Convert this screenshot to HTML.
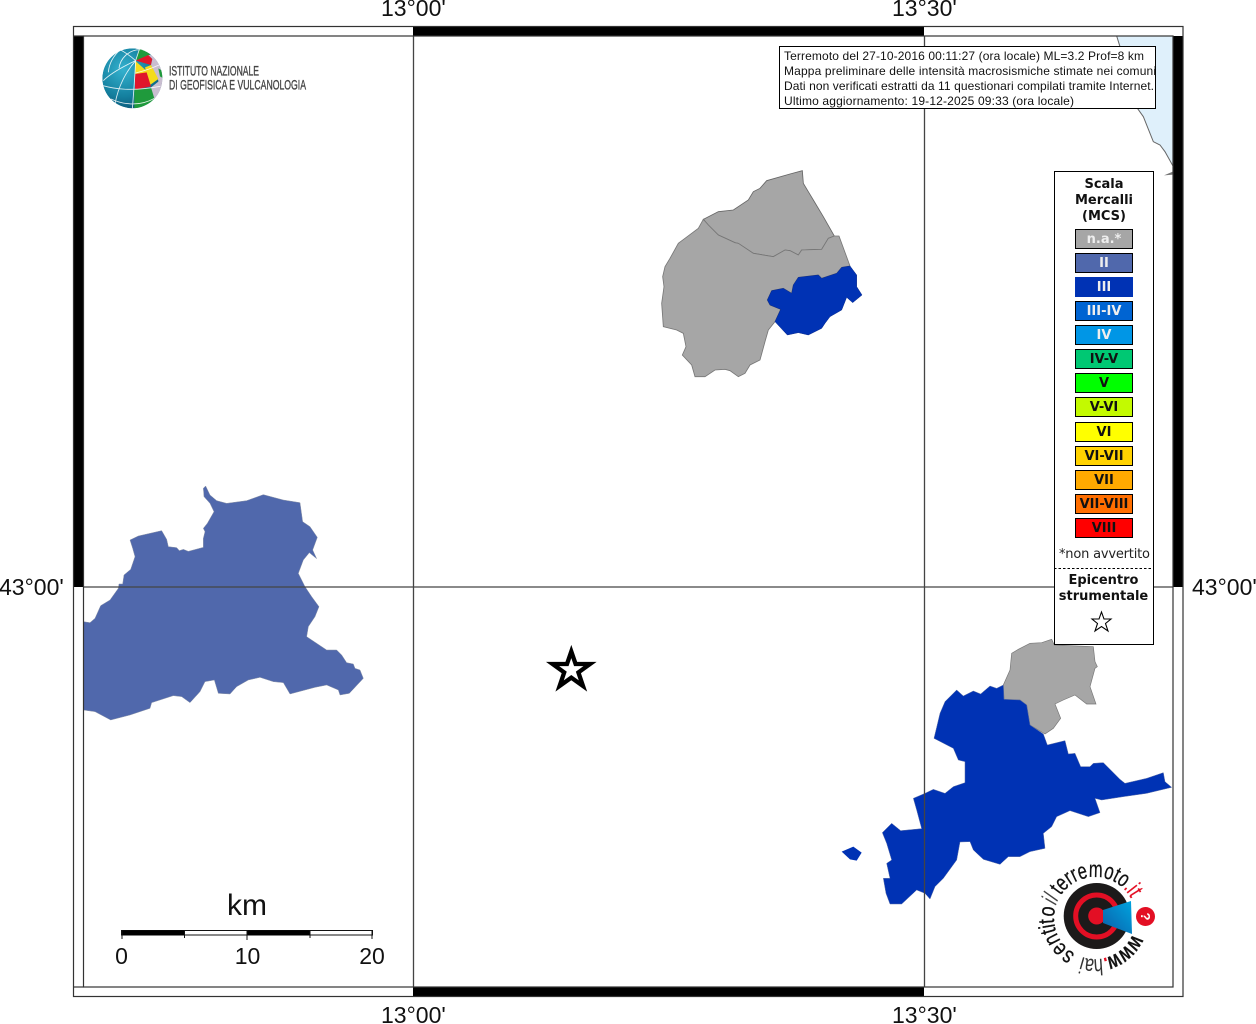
<!DOCTYPE html>
<html>
<head>
<meta charset="utf-8">
<style>
html,body{margin:0;padding:0;background:#fff;width:1256px;height:1024px;overflow:hidden}
svg{display:block}
.m{font-family:"Liberation Sans",Arial,sans-serif;font-size:23px;fill:#111}
.i{font-family:"Liberation Sans",Arial,sans-serif;font-size:12px;fill:#111}
.d{font-family:"DejaVu Sans",sans-serif;font-size:13px;font-weight:bold;text-anchor:middle}
.h{font-family:"DejaVu Sans",sans-serif;font-size:13px;font-weight:bold;text-anchor:middle;fill:#111}
.lg text{font-family:"Liberation Sans",sans-serif;font-size:23px;text-anchor:middle;fill:#111}
</style>
</head>
<body>
<svg width="1256" height="1024" viewBox="0 0 1256 1024" xmlns="http://www.w3.org/2000/svg">
<defs>
<radialGradient id="gl" cx="35%" cy="35%" r="75%"><stop offset="0" stop-color="#35b2cf"/><stop offset=".6" stop-color="#14809f"/><stop offset="1" stop-color="#0b4f70"/></radialGradient>
<linearGradient id="cone" x1="0" y1="1" x2="1" y2="0"><stop offset="0" stop-color="#0a5ea8"/><stop offset="1" stop-color="#00a5e0"/></linearGradient>
<clipPath id="gc"><circle cx="112" cy="118" r="90"/></clipPath>
<clipPath id="ib"><rect x="780" y="46" width="376" height="63"/></clipPath>
</defs>

<!-- sea -->
<g transform="translate(1110 20) scale(.33333)">
<polygon points="20,48 190,48 190,440 150,375 130,365 100,290 80,262 30,80" fill="#dff0fb"/>
<polyline points="20,48 30,80 80,262 100,290 130,365 150,375 165,395 190,440" fill="none" stroke="#666" stroke-width="3"/>
<polygon points="162,466 190,454 190,464" fill="#777"/>
</g>

<!-- west area -->
<g transform="translate(70 480) scale(.33333)">
<polygon fill="#5068ac" stroke="#8a93a8" stroke-width="1.5" points="40,425 60,428 75,415 92,377 120,360 145,325 147,312 158,312 162,285 182,268 195,230 188,205 180,180 205,168 275,152 290,178 295,200 320,203 328,212 340,208 355,214 400,202 400,175 405,155 400,145 412,130 432,95 420,70 402,50 400,25 407,18 420,45 440,62 470,70 530,62 580,44 640,60 690,68 698,125 720,140 742,172 728,210 740,236 718,218 700,240 685,280 705,320 725,350 747,380 735,410 715,440 710,470 770,510 800,510 815,525 830,548 850,552 855,565 870,570 880,595 838,640 810,645 805,630 770,615 735,622 660,642 640,608 610,605 570,592 535,600 500,620 480,642 445,640 433,600 405,605 390,635 360,668 335,650 310,647 245,668 240,685 180,705 122,720 75,695 40,690"/>
</g>

<!-- north area -->
<g transform="translate(650 160) scale(.33333)">
<polygon fill="#a6a6a6" stroke="#666" stroke-width="2.5" points="160,178 205,155 250,150 295,120 310,95 330,85 350,62 420,42 457,32 460,70 475,95 490,120 520,170 553,228 535,235 515,268 455,270 445,285 420,272 405,270 370,290 310,280 265,250 255,248 205,225 175,195"/>
<polygon fill="#a6a6a6" stroke="#777" stroke-width="2.5" points="160,178 175,195 205,225 255,248 265,250 310,280 370,290 405,270 420,272 445,285 455,270 515,268 535,235 553,228 567,228 600,318 575,322 560,340 515,355 505,345 445,352 430,375 425,400 400,385 365,392 352,420 360,435 392,448 375,485 355,510 345,545 330,600 300,615 285,640 265,650 240,632 225,628 195,630 165,650 135,650 125,615 97,585 108,560 100,520 80,510 40,500 35,430 42,380 38,350 45,320 60,295 85,250 105,235 145,205"/>
<polygon fill="#0032b4" stroke="#0a2a8a" stroke-width="1.5" points="600,318 620,345 620,380 636,405 608,428 590,412 575,450 540,470 525,490 515,505 475,525 445,518 412,525 375,485 392,448 360,435 352,420 365,392 400,385 425,400 430,375 445,352 505,345 515,355 560,340 575,322"/>
</g>

<!-- south-east area -->
<g transform="translate(830 630) scale(.33333)">
<polygon fill="#a6a6a6" stroke="#777" stroke-width="2" points="522,208 520,165 540,120 545,70 565,58 600,40 635,38 665,28 673,45 790,50 795,95 802,110 795,115 780,170 798,222 770,222 735,195 700,210 675,222 692,265 670,295 645,312 600,285 590,225 570,210"/>
<polygon fill="#0032b4" stroke="#5b6ea8" stroke-width="1.5" points="520,165 522,208 570,210 590,225 600,285 640,312 652,345 705,332 715,372 735,370 752,410 780,410 790,400 820,398 850,428 870,448 885,460 950,445 1000,428 1005,455 1025,472 950,490 880,500 815,510 795,505 810,548 775,560 720,542 680,560 665,590 640,610 645,655 600,665 570,680 535,680 510,703 460,688 430,660 420,635 390,636 380,690 340,745 315,770 300,807 285,790 260,780 215,822 180,822 168,790 160,745 180,745 170,700 185,690 170,640 157,608 185,580 212,602 275,596 260,540 250,505 285,490 310,478 345,490 370,470 405,458 405,395 385,390 370,355 312,325 320,292 330,250 345,215 365,195 380,180 400,198 430,183 452,192 480,168 500,175"/>
<polygon fill="#0032b4" points="35,665 70,650 95,668 80,692 60,688"/>
</g>

<!-- graticule -->
<g stroke="#444" stroke-width="1.3" fill="none">
<line x1="413.5" y1="36" x2="413.5" y2="987"/>
<line x1="924.5" y1="36" x2="924.5" y2="987"/>
<line x1="83" y1="587" x2="1173" y2="587"/>
</g>

<!-- frame -->
<rect x="74" y="36" width="9.5" height="551" fill="#000"/>
<rect x="1173" y="36" width="10" height="551" fill="#000"/>
<rect x="413" y="26.5" width="511" height="9.5" fill="#000"/>
<rect x="413" y="987" width="511" height="10" fill="#000"/>
<g fill="none" stroke="#333" stroke-width="1.2">
<rect x="73.5" y="26.5" width="1109.5" height="970"/>
<rect x="83.5" y="36" width="1089.5" height="951"/>
<line x1="73.5" y1="36" x2="83.5" y2="36"/>
<line x1="73.5" y1="987" x2="83.5" y2="987"/>
</g>

<!-- tick labels -->
<text class="m" x="381" y="16">13°00'</text>
<text class="m" x="892" y="16">13°30'</text>
<text class="m" x="381" y="1023">13°00'</text>
<text class="m" x="892" y="1023">13°30'</text>
<text class="m" x="-1" y="595">43°00'</text>
<text class="m" x="1192" y="595">43°00'</text>

<!-- info box -->
<rect x="779.5" y="46.5" width="376" height="62" fill="#fff" stroke="#000" stroke-width="1"/>
<g clip-path="url(#ib)">
<text class="i" x="784" y="60" textLength="360">Terremoto del 27-10-2016 00:11:27 (ora locale) ML=3.2 Prof=8 km</text>
<text class="i" x="784" y="75" textLength="372">Mappa preliminare delle intensità macrosismiche stimate nei comuni</text>
<text class="i" x="784" y="90" textLength="370">Dati non verificati estratti da 11 questionari compilati tramite Internet.</text>
<text class="i" x="784" y="105" textLength="290">Ultimo aggiornamento: 19-12-2025 09:33 (ora locale)</text>
</g>

<!-- legend -->
<rect x="1054.5" y="171.5" width="99" height="473" fill="#fff" stroke="#000" stroke-width="1"/>
<text class="h" x="1104" y="188">Scala</text>
<text class="h" x="1104" y="204">Mercalli</text>
<text class="h" x="1104" y="220">(MCS)</text>
<g stroke="#000" stroke-width="1">
<rect x="1075.5" y="229.5" width="57" height="19" fill="#a6a6a6"/>
<rect x="1075.5" y="253.5" width="57" height="19" fill="#5068ac"/>
<rect x="1075.5" y="277.5" width="57" height="19" fill="#0032b4" stroke="#0032b4"/>
<rect x="1075.5" y="301.5" width="57" height="19" fill="#0064d2"/>
<rect x="1075.5" y="325.5" width="57" height="19" fill="#0096e6"/>
<rect x="1075.5" y="349.5" width="57" height="19" fill="#00c873"/>
<rect x="1075.5" y="373.5" width="57" height="19" fill="#00ff00"/>
<rect x="1075.5" y="397.5" width="57" height="19" fill="#c3fa00"/>
<rect x="1075.5" y="422.5" width="57" height="19" fill="#ffff00"/>
<rect x="1075.5" y="446.5" width="57" height="19" fill="#ffd200"/>
<rect x="1075.5" y="470.5" width="57" height="19" fill="#ffaa00"/>
<rect x="1075.5" y="494.5" width="57" height="19" fill="#ff6e00"/>
<rect x="1075.5" y="518.5" width="57" height="19" fill="#ff0000"/>
</g>
<text class="d" fill="#eee" x="1104" y="243">n.a.*</text>
<text class="d" fill="#eee" x="1104" y="267">II</text>
<text class="d" fill="#eee" x="1104" y="291">III</text>
<text class="d" fill="#eee" x="1104" y="315">III-IV</text>
<text class="d" fill="#eee" x="1104" y="339">IV</text>
<g fill="#111">
<text class="d" x="1104" y="363">IV-V</text>
<text class="d" x="1104" y="387">V</text>
<text class="d" x="1104" y="411">V-VI</text>
<text class="d" x="1104" y="436">VI</text>
<text class="d" x="1104" y="460">VI-VII</text>
<text class="d" x="1104" y="484">VII</text>
<text class="d" x="1104" y="508">VII-VIII</text>
<text class="d" x="1104" y="532">VIII</text>
</g>
<text x="1104.5" y="558" text-anchor="middle" textLength="91" style="font-family:'DejaVu Sans',sans-serif;font-size:13px" fill="#222">*non avvertito</text>
<line x1="1054" y1="568.5" x2="1152" y2="568.5" stroke="#000" stroke-width="1" stroke-dasharray="2.5 2"/>
<text class="h" x="1103.5" y="584">Epicentro</text>
<text class="h" x="1103.5" y="600">strumentale</text>
<polygon points="1101.5,612 1104,619 1111,619 1105.5,623.5 1108,631 1101.5,626.5 1095,631 1097.5,623.5 1092,619 1099,619" fill="#fff" stroke="#000" stroke-width="1.1"/>

<!-- epicentre star -->
<polygon points="571.3,651.5 575.6,664 590,664 578.4,672.4 583,686 571.3,677.6 559.6,686 564.2,672.4 552.6,664 567,664" fill="#fff" stroke="#000" stroke-width="4.3" stroke-miterlimit="10"/>

<!-- scale bar -->
<rect x="121.5" y="930.5" width="251" height="4.5" fill="#fff" stroke="#111" stroke-width="1"/>
<rect x="122" y="930.5" width="62.5" height="5" fill="#000"/>
<rect x="247" y="930.5" width="63" height="5" fill="#000"/>
<g stroke="#111" stroke-width="1">
<line x1="122" y1="930" x2="122" y2="939"/>
<line x1="184.5" y1="930" x2="184.5" y2="938"/>
<line x1="247" y1="930" x2="247" y2="940"/>
<line x1="310" y1="930" x2="310" y2="938"/>
<line x1="372" y1="930" x2="372" y2="939"/>
</g>
<text x="247" y="915" text-anchor="middle" style="font-family:'Liberation Sans',sans-serif;font-size:30px" fill="#111">km</text>
<g style="font-family:'Liberation Sans',sans-serif;font-size:23px" fill="#111" text-anchor="middle">
<text x="121.5" y="964">0</text>
<text x="247.5" y="964">10</text>
<text x="372" y="964">20</text>
</g>

<!-- INGV logo -->
<g transform="translate(95 39) scale(.33333)">
<g clip-path="url(#gc)">
<circle cx="112" cy="118" r="90" fill="url(#gl)"/>
<polygon points="122,65 135,20 175,40 160,50" fill="#1f9a3c"/>
<polygon points="122,65 160,48 172,60 168,78" fill="#e0162b"/>
<polygon points="160,48 215,50 205,150 190,170 190,125 168,78 172,60" fill="#c9bed0"/>
<polygon points="120,65 165,105 122,122" fill="#f4dc1c"/>
<polygon points="150,85 168,78 190,120 165,138" fill="#f4dc1c"/>
<polygon points="120,105 155,100 168,142 120,152" fill="#e0162b"/>
<polygon points="118,152 170,145 180,185 118,215" fill="#1f9a3c"/>
<polygon points="168,145 190,128 200,160 180,185" fill="#c9bed0"/>
<polygon points="190,88 210,100 205,118 195,112" fill="#1f9a3c"/>
<g fill="none" stroke="#fff" stroke-width="2.6" opacity=".85">
<path d="M122 65 C120 110 116 160 112 210"/>
<path d="M122 65 C95 95 70 140 60 195"/>
<path d="M122 65 C90 80 50 100 25 125"/>
<path d="M122 65 C105 50 90 40 75 32"/>
<path d="M122 65 L135 25"/>
<path d="M135 32 C100 32 75 60 72 88"/>
<path d="M78 30 C55 50 42 75 40 100"/>
<path d="M24 140 C60 150 110 158 196 142"/>
<path d="M48 180 C80 195 130 205 178 178"/>
<path d="M122 102 C150 95 170 88 192 78"/>
</g>
</g>
</g>
<g style="font-family:'Liberation Sans',sans-serif;font-size:14px" fill="#444" stroke="#444" stroke-width=".35">
<text x="169" y="75.5" textLength="90" lengthAdjust="spacingAndGlyphs">ISTITUTO NAZIONALE</text>
<text x="169" y="89.5" textLength="137" lengthAdjust="spacingAndGlyphs">DI GEOFISICA E VULCANOLOGIA</text>
</g>

<!-- haisentito logo -->
<circle cx="1096.7" cy="916" r="33" fill="#1c1a1a"/>
<circle cx="1096.7" cy="916" r="21" fill="none" stroke="#e30f24" stroke-width="5"/>
<circle cx="1096.7" cy="916" r="8.5" fill="#e30f24"/>
<polygon points="1103,910 1131,901 1132,934 1103,923" fill="url(#cone)"/>
<circle cx="1145.5" cy="916.5" r="9.5" fill="#e30f24"/>
<text x="1145.5" y="921" text-anchor="middle" transform="rotate(90 1145.5 916.5)" style="font-family:'Liberation Sans',sans-serif;font-weight:bold;font-size:13px" fill="#fff">?</text>
<g class="lg" transform="translate(1095 918)" stroke="#111" stroke-width=".25">
<text transform="rotate(122) translate(0 -41) scale(.72 1)" font-weight="bold">w</text>
<text transform="rotate(139) translate(0 -41) scale(.72 1)" font-weight="bold">w</text>
<text transform="rotate(156) translate(0 -41) scale(.72 1)" font-weight="bold">w</text>
<text transform="rotate(166) translate(0 -41) scale(.72 1)" font-weight="bold" style="fill:#e30f24" stroke="none">.</text>
<text transform="rotate(176) translate(0 -41) scale(.72 1)" style="fill:#333" stroke="none">h</text>
<text transform="rotate(187) translate(0 -41) scale(.72 1)" style="fill:#333" stroke="none">a</text>
<text transform="rotate(196) translate(0 -41) scale(.72 1)" style="fill:#333" stroke="none">i</text>
<text transform="rotate(-145) translate(0 -41) scale(.78 1)">s</text>
<text transform="rotate(-131) translate(0 -41) scale(.78 1)">e</text>
<text transform="rotate(-117) translate(0 -41) scale(.78 1)">n</text>
<text transform="rotate(-106) translate(0 -41) scale(.78 1)">t</text>
<text transform="rotate(-100) translate(0 -41) scale(.78 1)">i</text>
<text transform="rotate(-94) translate(0 -41) scale(.78 1)">t</text>
<text transform="rotate(-82) translate(0 -41) scale(.78 1)">o</text>
<text transform="rotate(-71) translate(0 -41) scale(.72 1) skewX(-15)" style="fill:#444" stroke="none">i</text>
<text transform="rotate(-65.5) translate(0 -41) scale(.72 1) skewX(-15)" style="fill:#444" stroke="none">l</text>
<text transform="rotate(-53.7) translate(0 -41) scale(.72 1)">t</text>
<text transform="rotate(-44) translate(0 -41) scale(.72 1)">e</text>
<text transform="rotate(-33.6) translate(0 -41) scale(.72 1)">r</text>
<text transform="rotate(-25.8) translate(0 -41) scale(.72 1)">r</text>
<text transform="rotate(-15.4) translate(0 -41) scale(.72 1)">e</text>
<text transform="rotate(.9) translate(0 -41) scale(.72 1)">m</text>
<text transform="rotate(17.2) translate(0 -41) scale(.72 1)">o</text>
<text transform="rotate(27) translate(0 -41) scale(.72 1)">t</text>
<text transform="rotate(36.7) translate(0 -41) scale(.72 1)">o</text>
<text transform="rotate(46.5) translate(0 -41) scale(.72 1)" style="fill:#e30f24" stroke="#e30f24">.</text>
<text transform="rotate(52) translate(0 -41) scale(.72 1)" style="fill:#e30f24" stroke="#e30f24">i</text>
<text transform="rotate(58) translate(0 -41) scale(.72 1)" style="fill:#e30f24" stroke="#e30f24">t</text>
</g>
</svg>
</body>
</html>
